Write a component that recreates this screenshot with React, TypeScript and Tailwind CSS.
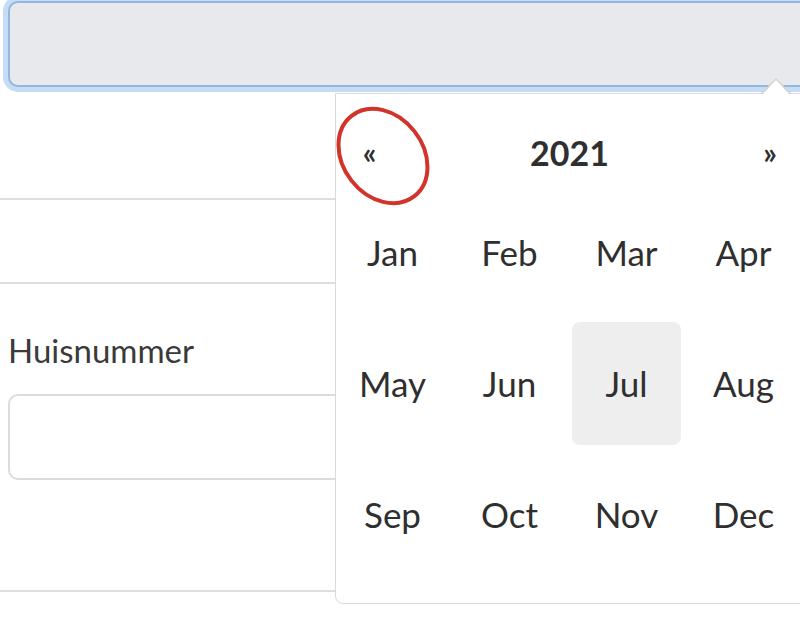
import React from "react";

const MONTHS = ["Jan", "Feb", "Mar", "Apr", "May", "Jun", "Jul", "Aug", "Sep", "Oct", "Nov", "Dec"];

function MonthPicker() {
  return (
    <div className="absolute left-[335px] top-[93px] w-[480px] rounded-bl-lg border border-[#d9d9d9] bg-white pb-[27px] pl-[2px] text-[#2f2f2f]">
      {/* caret pointing at the input */}
      <svg className="absolute -top-[16px] left-[424px]" width="32" height="17" viewBox="0 0 32 17">
        <polygon points="0,16 16,0 32,16" fill="#d4d4d4" />
        <polygon points="2,17 16,2 30,17" fill="#ffffff" />
      </svg>
      <div className="mt-[19px] flex h-[78px] w-[464px] items-center text-[34px] font-bold">
        <span className="w-[63px] text-center text-[30px]">«</span>
        <span className="flex-1 text-center">2021</span>
        <span className="w-[64px] text-center text-[30px]">»</span>
      </div>
      <div className="grid w-[468px] grid-cols-[repeat(4,109px)] gap-x-[8px] gap-y-[8px] text-[35px]">
        {MONTHS.map((m) => (
          <div
            key={m}
            className={`flex h-[123px] items-center justify-center rounded-lg ${m === "Jul" ? "bg-[#eeeeee]" : ""}`}
          >
            {m}
          </div>
        ))}
      </div>
      {/* red annotation around the prev button */}
      <svg className="pointer-events-none absolute -left-[10px] top-[6px]" width="116" height="116" viewBox="0 0 116 116">
        <ellipse cx="57" cy="56" rx="51" ry="40" transform="rotate(52 57 56)" fill="none" stroke="#d2342c" strokeWidth="4" />
      </svg>
    </div>
  );
}

export default function App() {
  return (
    <div className="relative h-[644px] w-[800px] overflow-hidden bg-white" style={{ fontFamily: "Lato, 'Noto Sans', sans-serif" }}>
      <div className="pt-[1px]">
        <div className="ml-[8px] h-[86px] w-[820px] rounded-[10px] border-2 border-[#93b6df] bg-[#e8e9ec] shadow-[0_0_0_5px_#c6dcf5]" />
      </div>
      <div className="mt-[111px] h-[86px] w-[820px] border-y-2 border-[#dedede]" />
      <div className="pl-[8px] pt-[50px] text-[33px] leading-none text-[#3a3a3a]">Huisnummer</div>
      <div className="ml-[8px] mt-[27px] h-[86px] w-[820px] rounded-[10px] border-2 border-[#dcdcdc] bg-white" />
      <div className="mt-[110px] h-[2px] w-[820px] bg-[#dedede]" />
      <MonthPicker />
    </div>
  );
}
